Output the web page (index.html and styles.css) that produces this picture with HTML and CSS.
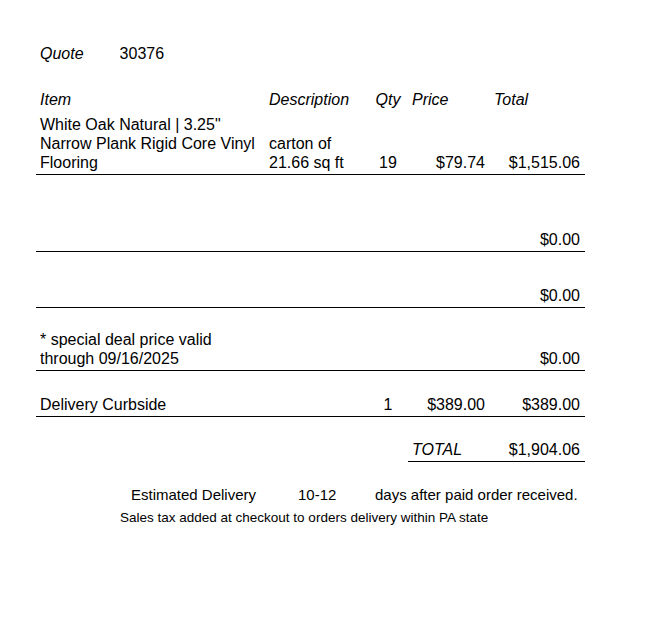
FILE: index.html
```html
<!DOCTYPE html>
<html>
<head>
<meta charset="utf-8">
<link rel="stylesheet" href="styles.css">
</head>
<body>
<div class="sheet">
  <table class="quote">
    <colgroup>
      <col class="c-item"><col class="c-desc"><col class="c-qty"><col class="c-price"><col class="c-total">
    </colgroup>
    <tr class="r-quote">
      <td><span class="it">Quote</span><span class="qnum">30376</span></td>
      <td></td><td></td><td></td><td></td>
    </tr>
    <tr class="r-head">
      <td class="it">Item</td>
      <td class="it">Description</td>
      <td class="it center">Qty</td>
      <td class="it">Price</td>
      <td class="it">Total</td>
    </tr>
    <tr class="r-item line">
      <td>White Oak Natural | 3.25"<br>Narrow Plank Rigid Core Vinyl<br>Flooring</td>
      <td>carton of<br>21.66 sq ft</td>
      <td class="center">19</td>
      <td class="num">$79.74</td>
      <td class="num">$1,515.06</td>
    </tr>
    <tr class="r-empty1 line">
      <td></td><td></td><td></td><td></td>
      <td class="num">$0.00</td>
    </tr>
    <tr class="r-empty2 line">
      <td></td><td></td><td></td><td></td>
      <td class="num">$0.00</td>
    </tr>
    <tr class="r-deal line">
      <td colspan="2">* special deal price valid<br>through 09/16/2025</td>
      <td></td><td></td>
      <td class="num">$0.00</td>
    </tr>
    <tr class="r-deliv line">
      <td>Delivery Curbside</td>
      <td></td>
      <td class="center">1</td>
      <td class="num">$389.00</td>
      <td class="num">$389.00</td>
    </tr>
    <tr class="r-total">
      <td></td><td></td><td></td>
      <td class="it ul">TOTAL</td>
      <td class="num ul">$1,904.06</td>
    </tr>
  </table>
  <div class="est">
    <span class="est-label">Estimated Delivery</span>
    <span class="est-days">10-12</span>
    <span class="est-text">days after paid order received.</span>
  </div>
  <div class="tax">Sales tax added at checkout to orders delivery within PA state</div>
</div>
</body>
</html>
```

FILE: styles.css
```css
html, body {
  margin: 0;
  padding: 0;
  background: #ffffff;
}
body {
  font-family: "Liberation Sans", Arial, sans-serif;
  font-size: 16px;
  color: #000000;
}
.sheet {
  padding: 19px 0 0 36px;
}
.quote {
  border-collapse: collapse;
  table-layout: fixed;
  width: 549px;
}
.c-item { width: 229px; }
.c-desc { width: 103px; }
.c-qty { width: 40px; }
.c-price { width: 82px; }
.c-total { width: 95px; }
.quote td {
  padding: 0 4px 2px 4px;
  line-height: 19px;
  vertical-align: bottom;
  white-space: nowrap;
  overflow: visible;
}
.it { font-style: italic; }
.center { text-align: center; }
.num { text-align: right; }
.quote td.num { padding-right: 5px; }
.qnum { margin-left: 36px; }
.r-quote { height: 46px; }
.r-head { height: 46px; }
.r-item { height: 63px; }
.r-empty1 { height: 77px; }
.r-empty2 { height: 56px; }
.r-deal { height: 63px; }
.r-deliv { height: 46px; }
.r-total { height: 45px; }
.line td { border-bottom: 1px solid #000; }
.r-total td.ul { border-bottom: 1px solid #000; }
.est {
  display: flex;
  padding-left: 95px;
  margin-top: 23px;
  line-height: 19px;
  font-size: 15px;
}
.est-label { width: 167px; }
.est-days { width: 77px; }
.tax {
  padding-left: 84px;
  font-size: 13.5px;
  line-height: 19px;
  margin-top: 4px;
  white-space: nowrap;
}
```
